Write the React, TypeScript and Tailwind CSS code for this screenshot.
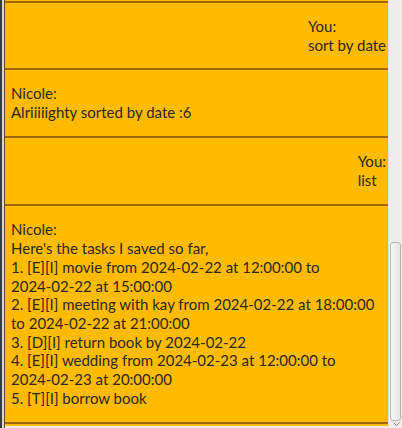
const font = { fontFamily: 'Lato, "Noto Sans", sans-serif' };

function YouMsg({ text, h }: { text: string; h: string }) {
  return (
    <div className={`border-t-2 border-[#9c6a00] flex items-center justify-end pr-[2px] ${h}`}>
      <div className="text-[15px] leading-[18.7px] text-[#2b2820]">
        <div>You:</div>
        <div>{text}</div>
      </div>
    </div>
  );
}

// keep dates like 2024-02-22 from breaking at the hyphen
function Line({ text }: { text: string }) {
  const words = text.split(' ');
  return (
    <div>
      {words.map((w, i) => (
        <span key={i}>
          <span className="whitespace-nowrap">{w}</span>
          {i < words.length - 1 ? ' ' : ''}
        </span>
      ))}
    </div>
  );
}

const tasks = [
  'Here\'s the tasks I saved so far,',
  '1. [E][I] movie from 2024-02-22 at 12:00:00 to 2024-02-22 at 15:00:00',
  '2. [E][I] meeting with kay from 2024-02-22 at 18:00:00 to 2024-02-22 at 21:00:00',
  '3. [D][I] return book by 2024-02-22',
  '4. [E][I] wedding from 2024-02-23 at 12:00:00 to 2024-02-23 at 20:00:00',
  '5. [T][I] borrow book',
];

export default function App() {
  return (
    <div className="w-[402px] h-[428px] flex bg-[#ececec] overflow-hidden" style={font}>
      <div className="w-[2px] bg-[#3a3a3a]" />
      <div className="w-[2px] bg-[#d6d6d6]" />
      <div className="w-[1px] bg-[#5a4a20]" />
      <div className="w-[383px] h-[426px] flex flex-col bg-[#ffbb00]">
        <div className="h-[1px]" />
        <YouMsg text="sort by date" h="h-[67px]" />
        <div className="h-[68px] border-t-2 border-[#9c6a00] flex items-center pl-[6px]">
          <div className="text-[15px] leading-[18.7px] text-[#2b2820]">
            <div>Nicole:</div>
            <div>Alriiiiighty sorted by date :6</div>
          </div>
        </div>
        <YouMsg text="list" h="h-[68px]" />
        <div className="h-[220px] border-y-2 border-[#9c6a00] flex items-center pl-[6px] pr-[8px]">
          <div className="text-[15px] leading-[18.7px] text-[#2b2820]">
            <div>Nicole:</div>
            {tasks.map(t => (
              <Line key={t} text={t} />
            ))}
          </div>
        </div>
      </div>
      <div className="flex-1 relative bg-[#ededed] border-l border-[#e2e2e2]">
        <div className="absolute left-[1px] top-[242px] w-[11px] h-[179px] rounded-[3px] border border-[#b5b5b5] bg-gradient-to-r from-[#f9f9f9] to-[#e4e4e4]" />
        <svg className="absolute left-[4px] top-[422px]" width="7" height="5" viewBox="0 0 7 5">
          <path d="M0.5 0.5 L3.5 3.5 L6.5 0.5" fill="none" stroke="#8a8a8a" strokeWidth="1" />
        </svg>
      </div>
    </div>
  );
}
